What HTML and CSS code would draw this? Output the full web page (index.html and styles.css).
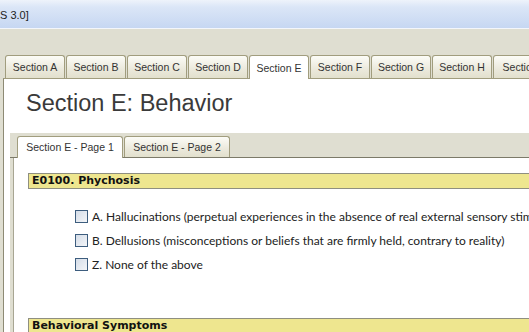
FILE: index.html
```html
<!DOCTYPE html>
<html lang="en">

<head>
    <meta charset="UTF-8">
    <meta name="viewport" content="width=device-width, initial-scale=1.0">
    <title>Section E</title>
    <link rel="stylesheet" href="styles.css">
</head>

<body>
    <div class="window">
        <div class="titlebar">S 3.0]</div>

        <div class="tabs">
            <div class="tab">Section A</div>
            <div class="tab">Section B</div>
            <div class="tab">Section C</div>
            <div class="tab">Section D</div>
            <div class="tab active">Section E</div>
            <div class="tab">Section F</div>
            <div class="tab">Section G</div>
            <div class="tab">Section H</div>
            <div class="tab">Section I</div>
            <div class="tab">Section J</div>
        </div>

        <div class="panel">
            <h1 class="page-title">Section E: Behavior</h1>

            <div class="subtabs">
                <div class="subtab active">Section E - Page 1</div>
                <div class="subtab">Section E - Page 2</div>
            </div>

            <div class="subpanel">
                <div class="subpanel-inner">
                    <div class="item-header">E0100. Phychosis</div>

                    <div class="options">
                        <label class="option"><span class="box"></span>A. Hallucinations (perpetual experiences in the absence of real external sensory stimuli)</label>
                        <label class="option"><span class="box"></span>B. Dellusions (misconceptions or beliefs that are firmly held, contrary to reality)</label>
                        <label class="option"><span class="box"></span>Z. None of the above</label>
                    </div>

                    <div class="item-header second">Behavioral Symptoms</div>
                </div>
            </div>
        </div>
    </div>
</body>

</html>
```

FILE: styles.css
```css
html,
body {
    margin: 0;
    height: 100%;
    overflow: hidden;
}

body {
    background-color: #dfded1;
    font-family: "Liberation Sans", Arial, sans-serif;
    color: #333;
}

.window {
    width: 760px;
}

.titlebar {
    height: 28px;
    line-height: 31px;
    font-size: 11px;
    color: #222;
    background: linear-gradient(#eef3fb 0%, #dbe6f7 25%, #c6d7f2 100%);
    border-bottom: 1px solid #f3f6fb;
}

.tabs {
    display: flex;
    gap: 1px;
    padding: 26px 0 0 5px;
    position: relative;
    z-index: 1;
}

.tab {
    flex: none;
    width: 58px;
    height: 22px;
    line-height: 22px;
    text-align: center;
    font-size: 10.5px;
    color: #333;
    border: 1px solid #a19d7e;
    border-bottom: none;
    border-radius: 3px 3px 0 0;
    background: linear-gradient(#fcfcf7, #ebe9dc 60%, #e2e0cd);
}

.tab.active {
    background: #fff;
    height: 23px;
    margin-bottom: -1px;
    line-height: 24px;
}

.panel {
    margin-left: 3px;
    background-color: #fff;
    border-left: 1px solid #8d8a74;
    border-top: 1px solid #a19d7e;
    height: 260px;
}

.page-title {
    margin: 10px 0 0 22px;
    font-size: 23.5px;
    line-height: 28px;
    font-weight: normal;
    color: #3a3a3a;
}

.subtabs {
    display: flex;
    gap: 1px;
    margin: 16px 0 0 6px;
    padding: 3px 0 0 7px;
    height: 21px;
    background-color: #dfded1;
    border-bottom: 1px solid #7c7a69;
    position: relative;
}

.subtab {
    flex: none;
    width: 104px;
    height: 20px;
    line-height: 21px;
    text-align: center;
    font-size: 10.5px;
    color: #333;
    border: 1px solid #a19d7e;
    border-bottom: none;
    border-radius: 3px 3px 0 0;
    background: linear-gradient(#fcfcf7, #ebe9dc 60%, #e2e0cd);
}

.subtab.active {
    background: #fff;
    height: 21px;
    margin-bottom: -1px;
}

.subpanel {
    margin-left: 6px;
    border-left: 3px solid #dfded1;
    height: 200px;
}

.subpanel-inner {
    border-left: 1px solid #a8a693;
    height: 100%;
    padding-top: 15px;
}

.item-header {
    margin-left: 14px;
    height: 14px;
    line-height: 14px;
    padding-left: 3px;
    font-family: "DejaVu Sans", Verdana, sans-serif;
    font-size: 11px;
    font-weight: bold;
    color: #111;
    background-color: #eee68f;
    border-top: 1px solid #8f8f80;
    border-bottom: 1px solid #8f8f80;
    border-left: 1px solid #8f8f80;
}

.item-header.second {
    margin-top: 42px;
}

.options {
    margin: 15px 0 0 61px;
}

.option {
    display: flex;
    align-items: center;
    gap: 4px;
    height: 24px;
    white-space: nowrap;
    font-family: Lato, "Liberation Sans", sans-serif;
    font-size: 12px;
    color: #222;
}

.box {
    flex: none;
    width: 11px;
    height: 11px;
    border: 1px solid #3d5d7e;
    background: linear-gradient(135deg, #d5dde8, #f3f5f8);
}
```
